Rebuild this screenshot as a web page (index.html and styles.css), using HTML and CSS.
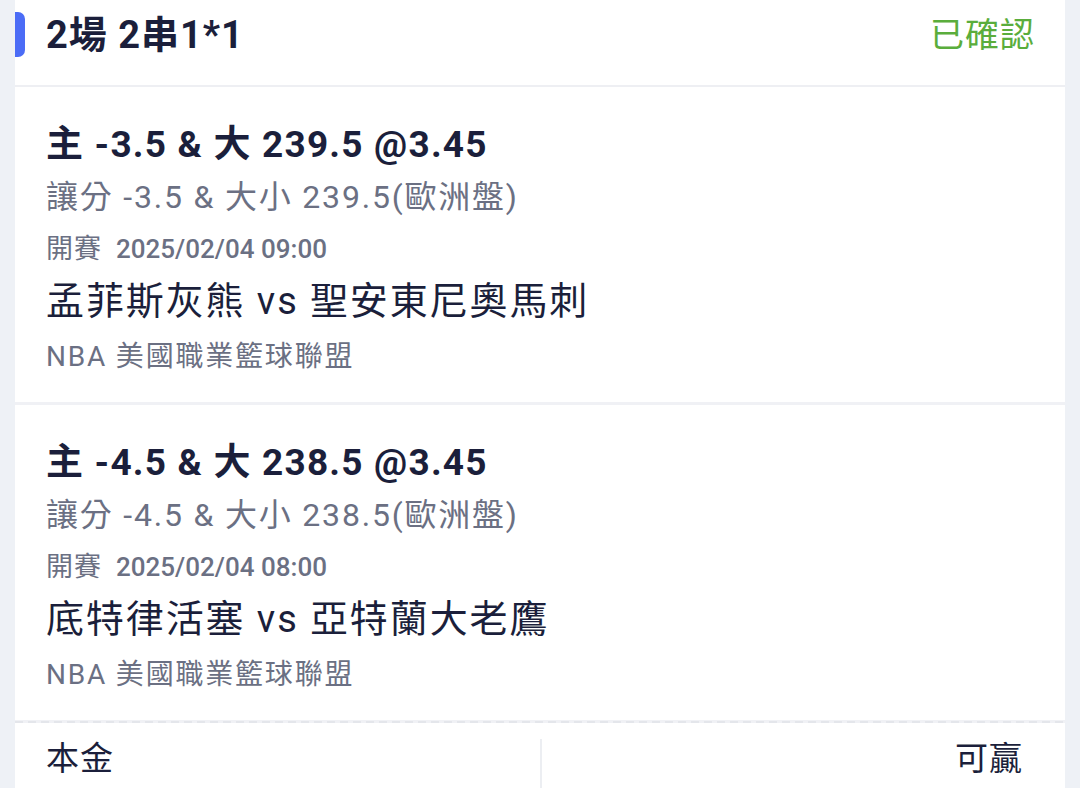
FILE: index.html
```html
<!DOCTYPE html>
<html lang="zh-Hant">
<head>
<meta charset="utf-8">
<link rel="stylesheet" href="styles.css">
</head>
<body>
<div class="card">
  <div class="head">
    <div class="head-title">2場 2串1*1</div>
    <div class="status">已確認</div>
  </div>
  <div class="leg">
    <div class="pick">主 -3.5 &amp; 大 239.5 @3.45</div>
    <div class="market">讓分 -3.5 &amp; 大小 239.5(歐洲盤)</div>
    <div class="time"><span class="time-label">開賽</span><span class="time-val">2025/02/04 09:00</span></div>
    <div class="teams">孟菲斯灰熊 vs 聖安東尼奧馬刺</div>
    <div class="league">NBA 美國職業籃球聯盟</div>
  </div>
  <div class="leg">
    <div class="pick">主 -4.5 &amp; 大 238.5 @3.45</div>
    <div class="market">讓分 -4.5 &amp; 大小 238.5(歐洲盤)</div>
    <div class="time"><span class="time-label">開賽</span><span class="time-val">2025/02/04 08:00</span></div>
    <div class="teams">底特律活塞 vs 亞特蘭大老鷹</div>
    <div class="league">NBA 美國職業籃球聯盟</div>
  </div>
  <div class="dash"></div>
  <div class="foot">
    <div class="cell">本金</div>
    <div class="cell cell-right">可贏</div>
  </div>
</div>
</body>
</html>
```

FILE: styles.css
```css
html, body {
  margin: 0;
  padding: 0;
  background: #eef1f6;
  height: 100%;
  overflow: hidden;
}
body {
  font-family: Roboto, "Noto Sans CJK TC", sans-serif;
  color: #1b1f3b;
}
.card {
  margin-left: 15px;
  width: 1050px;
  background: #fff;
  min-height: 788px;
}
.head {
  position: relative;
  height: 85px;
  display: flex;
  align-items: center;
  justify-content: space-between;
  padding: 0 30px 0 31px;
  border-bottom: 2px solid #eeeff3;
}
.head::before {
  content: "";
  position: absolute;
  left: 0;
  top: 12px;
  width: 10px;
  height: 45px;
  background: #4b6cf6;
  border-radius: 0 7px 7px 0;
}
.head-title {
  font-size: 38px;
  font-weight: 700;
  letter-spacing: 1px;
  margin-top: -22px;
}
.status {
  font-size: 34px;
  color: #5aad3c;
  letter-spacing: 1px;
  margin-top: -20px;
}
.leg {
  padding: 32px 31px 19px;
  border-bottom: 3px solid #f0f1f5;
}
.leg:last-of-type {
  border-bottom: none;
}
.pick {
  font-size: 37px;
  font-weight: 700;
  line-height: 52px;
  letter-spacing: 1.2px;
}
.market {
  font-size: 32px;
  line-height: 52px;
  color: #6b7083;
  letter-spacing: 1.8px;
}
.time {
  display: flex;
  align-items: center;
  line-height: 52px;
  color: #6b7083;
}
.time-label {
  font-size: 27px;
  letter-spacing: 1px;
  margin-right: 14px;
}
.time-val {
  font-size: 26px;
  font-weight: 500;
}
.teams {
  font-size: 38px;
  line-height: 52px;
  letter-spacing: 1.9px;
}
.league {
  font-size: 28px;
  line-height: 52px;
  margin-top: 4px;
  color: #6b7083;
  letter-spacing: 1.8px;
}
.dash {
  height: 2px;
  margin-top: -2px;
  background: repeating-linear-gradient(90deg, #e4e6eb 0 8px, transparent 8px 13px);
}
.foot {
  display: flex;
  padding-top: 16px;
}
.cell {
  box-sizing: border-box;
  width: 50%;
  font-size: 33px;
  line-height: 40px;
  padding: 0 31px;
  letter-spacing: 1px;
  height: 60px;
}
.cell-right {
  text-align: right;
  padding-right: 42px;
  border-left: 2px solid #eceef2;
}
```
